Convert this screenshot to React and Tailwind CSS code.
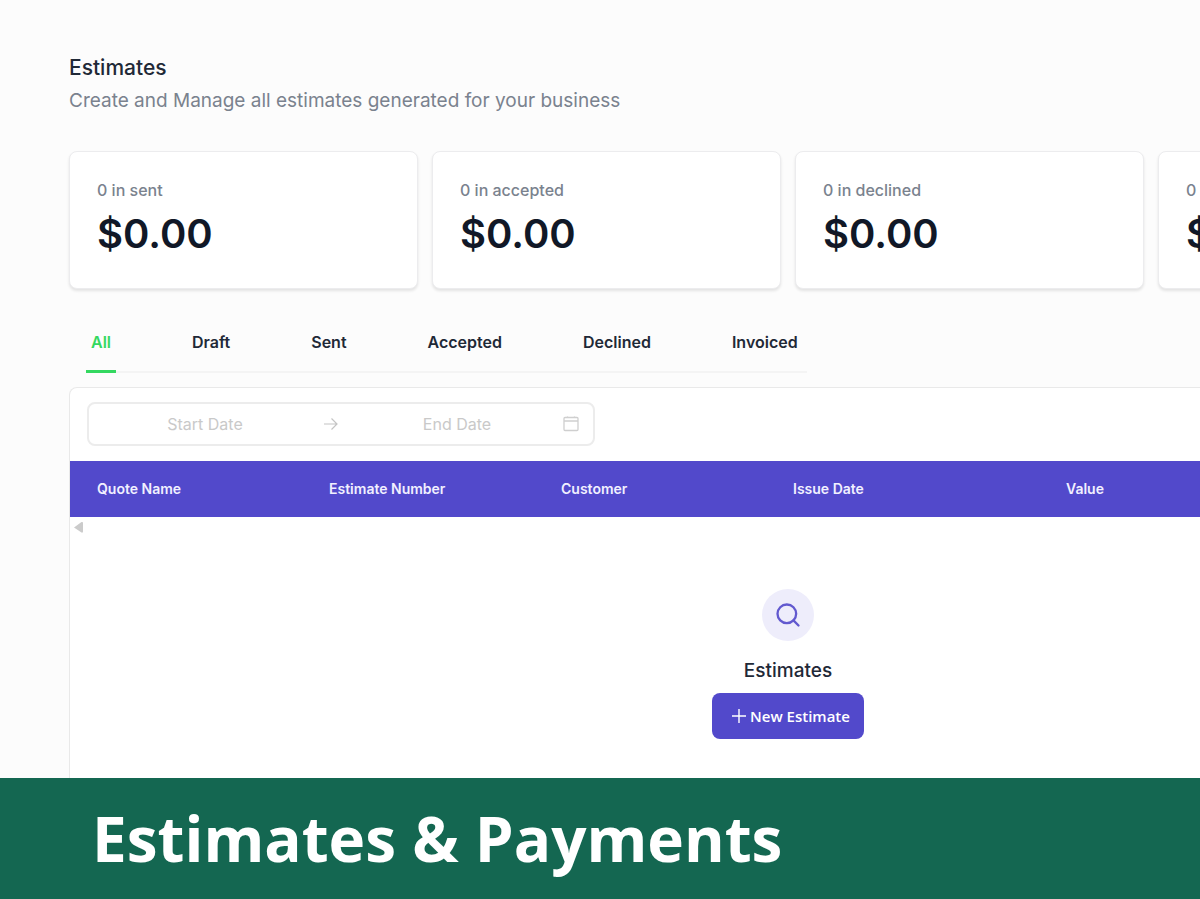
import { useState } from "react";
import { Search } from "lucide-react";

const stats = [
    { label: "0 in sent", amount: "$0.00" },
    { label: "0 in accepted", amount: "$0.00" },
    { label: "0 in declined", amount: "$0.00" },
    { label: "0 in invoiced", amount: "$0.00" },
];

const tabs = ["All", "Draft", "Sent", "Accepted", "Declined", "Invoiced"];

const columns = [
    { title: "Quote Name", className: "w-[232px] pl-[27px] text-left" },
    { title: "Estimate Number", className: "w-[232px] pl-[27px] text-left" },
    { title: "Customer", className: "w-[232px] pl-[27px] text-left" },
    { title: "Issue Date", className: "w-[232px] pl-[27px] text-left" },
    { title: "Value", className: "w-[174px] text-center" },
];

function StatCard({ label, amount }) {
    return (
        <div className="rounded-lg border border-[#ececee] bg-white px-[27px] py-6 shadow-[0_2px_3px_rgba(0,0,0,0.1)]">
            <p className="text-base leading-7 font-medium text-[#7a828e]">{label}</p>
            <p className="text-[40px] leading-15 font-semibold text-[#111827]">{amount}</p>
        </div>
    );
}

function DateRange() {
    const inputClass =
        "w-0 flex-1 bg-transparent text-center text-base text-gray-700 outline-none placeholder:text-[#c9c9c9]";

    return (
        <div className="flex h-11 w-[508px] items-center rounded-lg border-2 border-[#ececec] bg-white pr-3.5 pl-3">
            <input type="text" aria-label="Start Date" placeholder="Start Date" className={inputClass} />
            <svg className="mx-3.5 h-4 w-4 shrink-0" viewBox="0 0 16 16" fill="none" stroke="#c4c4c4" strokeWidth="1.2">
                <path d="M1 8h13M8.5 2.5 14 8l-5.5 5.5" />
            </svg>
            <input type="text" aria-label="End Date" placeholder="End Date" className={inputClass} />
            <svg className="ml-0.5 h-4 w-4 shrink-0" viewBox="0 0 16 16" fill="none" stroke="#cfcfcf" strokeWidth="1.3">
                <rect x="1" y="1.5" width="14" height="13" rx="1" />
                <path d="M1 5h14M4.5 .5V2M11.5 .5V2" />
            </svg>
        </div>
    );
}

export default function App() {
    const [activeTab, setActiveTab] = useState("All");

    return (
        <div className="flex min-h-screen flex-col overflow-hidden bg-[#fcfcfc] font-['Inter',sans-serif]">
            <main className="flex flex-1 flex-col overflow-hidden pt-13 pl-[69px]">
                <h1 className="text-[21px] leading-8 font-medium text-[#1f2937]">Estimates</h1>
                <p className="text-[19px] leading-[34px] text-[#7a828e]">
                    Create and Manage all estimates generated for your business
                </p>

                {/* Stats and table are wider than the window and get cut at its right edge */}
                <div className="mt-[33px] flex w-[1438px] flex-1 flex-col">
                    <div className="grid grid-cols-4 gap-3.5">
                        {stats.map((stat) => (
                            <StatCard key={stat.label} {...stat} />
                        ))}
                    </div>

                    <nav className="mt-[31px] ml-[17px] flex gap-[71px] self-start border-b-2 border-[#f4f4f4] pr-1">
                        {tabs.map((tab) => (
                            <button
                                key={tab}
                                type="button"
                                onClick={() => setActiveTab(tab)}
                                className={`-mb-0.5 border-b-3 px-[5px] pt-2 pb-[14px] text-base leading-7 font-semibold ${
                                    activeTab === tab
                                        ? "border-[#34d860] text-[#34d860]"
                                        : "border-transparent text-[#1f2937]"
                                }`}
                            >
                                {tab}
                            </button>
                        ))}
                    </nav>

                    <section className="mt-3.5 flex-1 rounded-t-lg border border-b-0 border-[#e9e9e9] bg-white">
                        <div className="px-[17px] pt-3.5 pb-[15px]">
                            <DateRange />
                        </div>

                        <table className="w-full table-fixed">
                            <thead className="bg-[#5249cb] text-sm text-[#f1f0ff]">
                                <tr>
                                    {columns.map((column) => (
                                        <th key={column.title} className={`h-14 font-semibold ${column.className}`}>
                                            {column.title}
                                        </th>
                                    ))}
                                    <th></th>
                                </tr>
                            </thead>
                        </table>

                        {/* Left arrow of the table's scroll bar */}
                        <svg className="mt-1 ml-1 h-3 w-2.5" viewBox="0 0 10 12" fill="#cbcbcb">
                            <path d="M0 6.5 7.5 1Q9 .5 9 2v8.500Q9 12 7.500 11.500z" />
                        </svg>

                        <div className="flex flex-col items-center pt-14 pb-8">
                            <div className="flex h-13 w-13 items-center justify-center rounded-full bg-[#eeedfb]">
                                <Search className="h-7 w-7 text-[#6259cf]" strokeWidth={2} />
                            </div>
                            <h2 className="mt-4 text-[19px] leading-7 font-medium text-[#1f2937]">Estimates</h2>
                            <button
                                type="button"
                                className="mt-2 flex h-[46px] items-center gap-1 rounded-lg bg-[#5249cb] pr-3.5 pl-5 font-['Open_Sans',sans-serif] text-[15px] font-semibold text-white"
                            >
                                <svg className="h-3.5 w-3.5" viewBox="0 0 14 14" stroke="currentColor" strokeWidth="1.4">
                                    <path d="M7 0v14M0 7h14" />
                                </svg>
                                New Estimate
                            </button>
                        </div>
                    </section>
                </div>
            </main>

            <footer className="bg-[#146751] pt-5 pb-[21px] pl-[92px]">
                <p className="font-['Open_Sans',sans-serif] text-[62px] leading-20 font-bold text-white">
                    Estimates &amp; Payments
                </p>
            </footer>
        </div>
    );
}
